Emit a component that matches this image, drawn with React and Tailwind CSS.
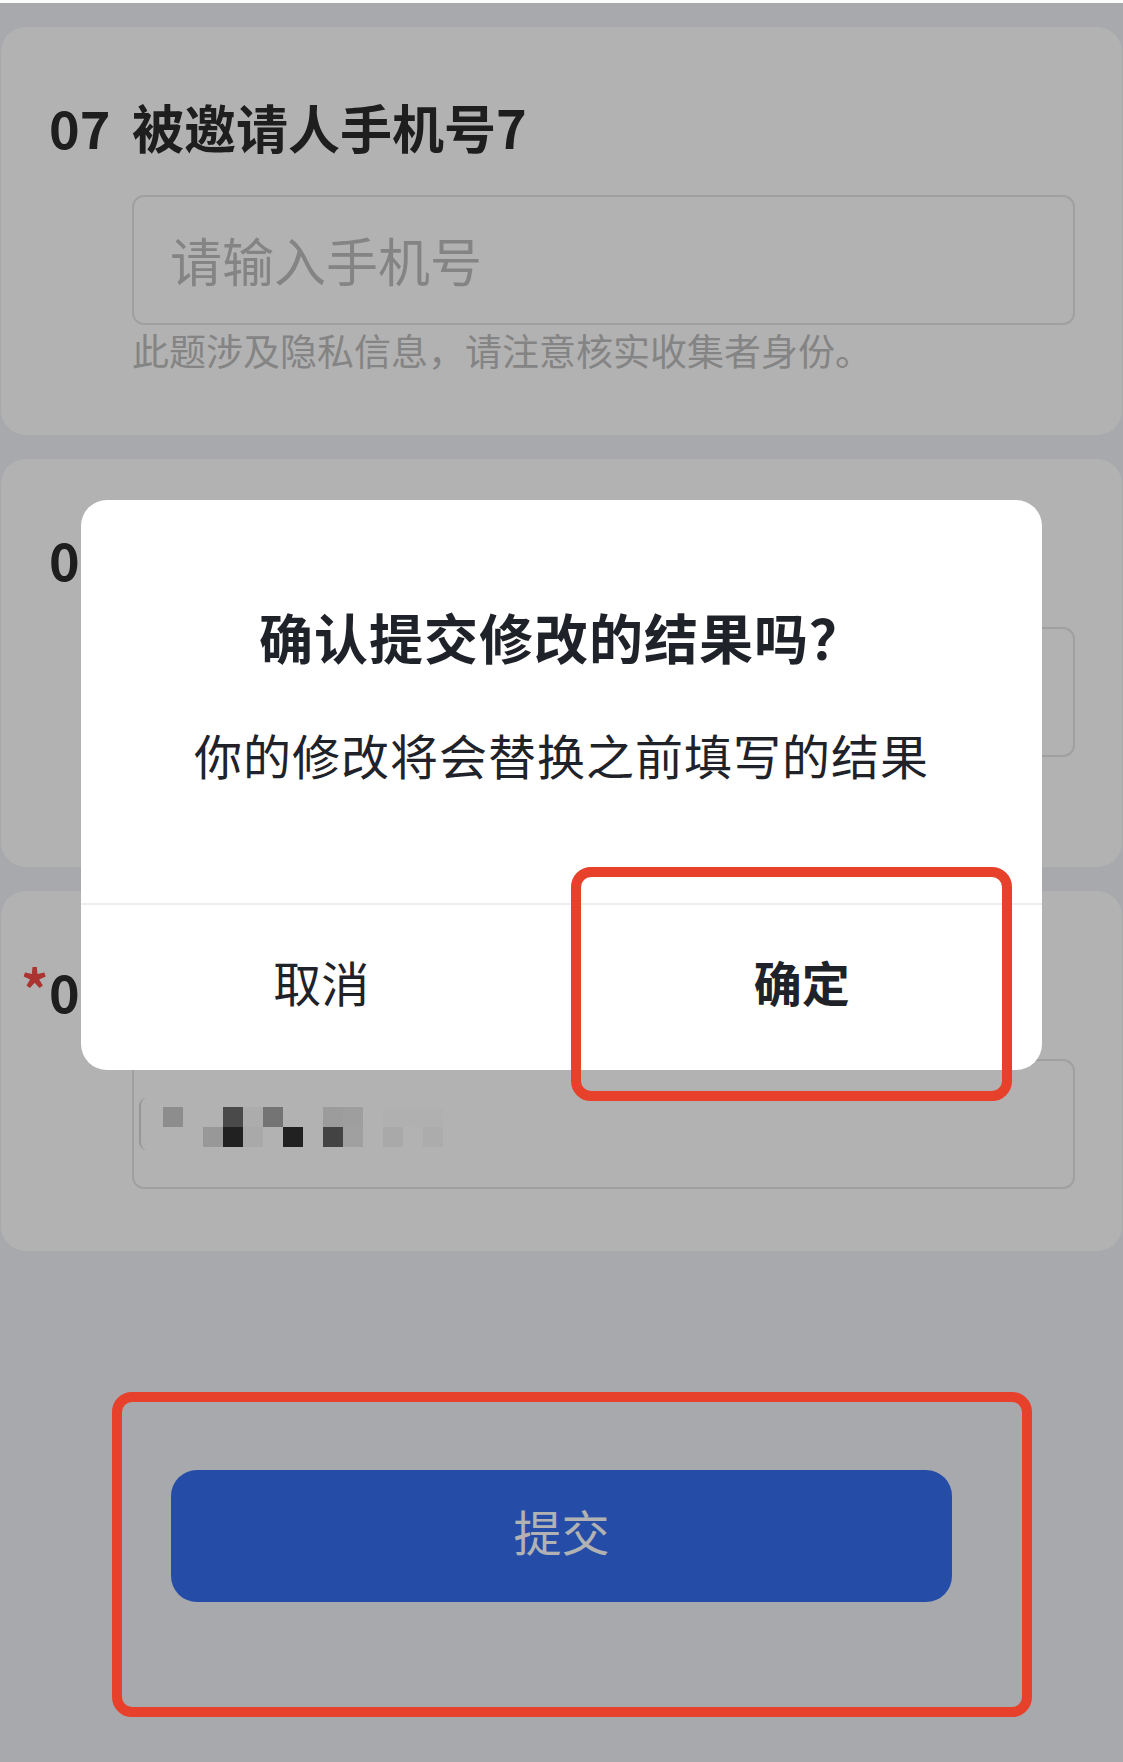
import React from "react";

const row1 = [
  "bg-[#cbcbcb]", "bg-white", "bg-white", "bg-[#6a6a6a]", "bg-[#f6f6f6]",
  "bg-[#a7a7a7]", "bg-white", "bg-white", "bg-[#e0e0e0]", "bg-[#e2e2e2]",
  "bg-white", "bg-[#fcfcfc]", "bg-[#fcfcfc]", "bg-[#fcfcfc]", "bg-white",
];
const row2 = [
  "bg-white", "bg-white", "bg-[#dadada]", "bg-[#303030]", "bg-[#f3f3f3]",
  "bg-white", "bg-[#303030]", "bg-white", "bg-[#616161]", "bg-[#e5e5e5]",
  "bg-white", "bg-[#f3f3f3]", "bg-white", "bg-[#f7f7f7]", "bg-white",
];

function Title({ num, text, required }) {
  return (
    <div className="flex items-center text-[52px] font-bold leading-[60px] text-[#2b2b2b]">
      {required && (
        <span className="-ml-[28px] w-[28px] self-start pt-[2px] text-[54px] leading-[50px] text-[#f54a45]">*</span>
      )}
      <span className="w-[83px] shrink-0">{num}</span>
      <span>{text}</span>
    </div>
  );
}

function PhoneCard({ num, text }) {
  return (
    <div className="h-[408px] rounded-[25px] bg-white pl-[48px] pr-[47px] pt-[70px]">
      <Title num={num} text={text} />
      <div className="ml-[83px] mt-[38px]">
        <div className="flex h-[130px] items-center rounded-[12px] border-2 border-[#e6e6e6] pl-[36px] text-[52px] text-[#bebebe]">
          请输入手机号
        </div>
        <div className="mt-[5px] text-[37px] leading-[40px] text-[#bdbdbd]">
          此题涉及隐私信息，请注意核实收集者身份。
        </div>
      </div>
    </div>
  );
}

export default function App() {
  return (
    <div className="relative min-h-[1762px] overflow-hidden border-t-[3px] border-[#fbfbfb] bg-[#f1f3f6] font-['Noto_Sans_CJK_SC','Noto_Sans',sans-serif]">
      <div className="flex flex-col gap-[24px] px-[1px] pt-[24px]">
        <PhoneCard num="07" text="被邀请人手机号7" />
        <PhoneCard num="08" text="被邀请人手机号8" />
        <div className="h-[360px] rounded-[25px] bg-white pl-[48px] pr-[47px] pt-[70px]">
          <Title num="09" text="被邀请人手机号9" required />
          <div className="ml-[83px] mt-[38px]">
            <div className="flex h-[130px] items-center rounded-[12px] border-2 border-[#e6e6e6] pl-[5px]">
              <div className="h-[52px] w-[8px] rounded-l-full border-l-2 border-[#d8d8d8]"></div>
              <div className="ml-[16px] flex flex-col self-start pt-[46px]">
                <div className="flex">
                  {row1.map((c, i) => (
                    <div key={i} className={`h-[20px] w-[20px] ${c}`}></div>
                  ))}
                </div>
                <div className="flex">
                  {row2.map((c, i) => (
                    <div key={i} className={`h-[20px] w-[20px] ${c}`}></div>
                  ))}
                </div>
              </div>
            </div>
          </div>
        </div>
      </div>

      <div className="mt-[219px] flex justify-center">
        <button className="flex h-[132px] w-[781px] items-center justify-center rounded-[26px] bg-[#356ff1] pb-[12px] text-[48px] text-white">
          提交
        </button>
      </div>

      {/* mask */}
      <div className="absolute inset-0 bg-black/30"></div>

      {/* dialog */}
      <div className="absolute inset-x-0 top-[497px] flex justify-center">
        <div className="w-[961px] overflow-hidden rounded-[26px] bg-white text-[#1f2329]">
          <div className="flex h-[403px] flex-col items-center pt-[104px]">
            <div className="text-[54px] font-bold leading-[66px] tracking-[1px]">确认提交修改的结果吗？</div>
            <div className="mt-[55px] text-[48px] leading-[58px] tracking-[1px]">你的修改将会替换之前填写的结果</div>
          </div>
          <div className="grid h-[167px] grid-cols-2 border-t-2 border-[#eeeeee] pb-[14px] text-[48px]">
            <div className="flex items-center justify-center">取消</div>
            <div className="flex items-center justify-center font-bold">确定</div>
          </div>
        </div>
      </div>

      {/* annotations */}
      <div className="absolute left-[571px] top-[864px] h-[234px] w-[441px] rounded-[20px] border-[10px] border-[#e8412b]"></div>
      <div className="absolute left-[112px] top-[1389px] h-[325px] w-[920px] rounded-[20px] border-[10px] border-[#e8412b]"></div>
    </div>
  );
}
